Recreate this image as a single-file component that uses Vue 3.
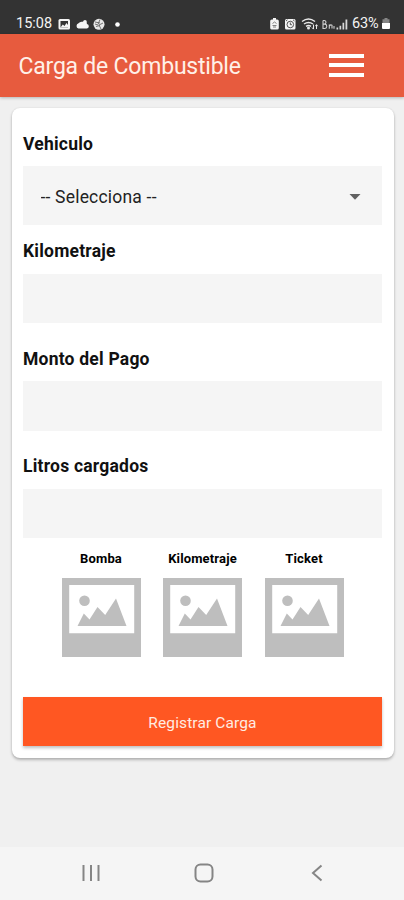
<script setup>
import { ref } from 'vue'

const vehicle = ref('')
const fields = ref([
  { id: 'km', label: 'Kilometraje', value: '' },
  { id: 'monto', label: 'Monto del Pago', value: '' },
  { id: 'litros', label: 'Litros cargados', value: '' }
])
const photos = ['Bomba', 'Kilometraje', 'Ticket']
</script>

<template>
  <div class="screen">
    <div class="status">
      <span class="time">15:08</span>
      <svg class="left-icons" width="66" height="14" viewBox="0 0 66 14">
        <rect x="0.5" y="2" width="11.5" height="10.5" rx="1.5" fill="#f4f4f4" />
        <path d="M2.500 4h7.500v6.500h-7.500z" fill="#333" />
        <path d="M2.500 10.500l2.300-3 1.700 1.500L8.500 6l1.500 2v2.500z" fill="#f4f4f4" />
        <path d="M20.500 11.500a2.700 2.700 0 0 1 0-5.200 4 4 0 0 1 4-1.500 2.800 2.800 0 0 1 4.500 2.200 2.300 2.300 0 0 1 0 4.500z" fill="#f4f4f4" />
        <circle cx="27" cy="4.800" r="1.800" fill="#f4f4f4" />
        <circle cx="41" cy="7.300" r="5.500" fill="#e8e8e8" />
        <path d="M37 5l5 1M42 2.500l-2 5M45 6l-4 2M38 9.500l4-1M41 8l2 4M40 8l-3-1" stroke="#666" stroke-width="0.900" fill="none" />
        <circle cx="59.500" cy="7.500" r="2.300" fill="#fff" />
      </svg>
      <span class="spacer"></span>
      <svg class="right-icons" width="82" height="14" viewBox="0 0 82 14">
        <path d="M4 1h3v1.500h1.200q1.600 0 1.600 1.600v6.800q0 1.600-1.600 1.600H2.800q-1.600 0-1.600-1.600V4.100q0-1.600 1.600-1.600H4z" fill="#f4f4f4" />
        <path d="M3.500 6.500L5.500 5l2 1.500M3.500 8.500h4M4 10h3" stroke="#777" stroke-width="0.900" fill="none" />
        <rect x="16" y="2" width="10.500" height="10.500" rx="1.500" fill="#f4f4f4" />
        <circle cx="21.300" cy="7.500" r="3.300" fill="none" stroke="#444" stroke-width="0.900" />
        <path d="M21.300 5.500v2.200h1.600M17 4l1.500-1.200M25.500 4L24 2.800" stroke="#444" stroke-width="0.900" fill="none" />
        <g fill="none" stroke="#e8e8e8" stroke-width="1.500">
          <path d="M33 4.500q6.500-4.800 13 0M35 7q4.500-3.200 9 0M37 9.300q2.500-1.700 5 0" />
          <path d="M44.500 7.500v4.500M43 10.500l1.500 1.700M47.500 12V7.700M46.300 9.200l1.200-1.500 1.200 1.500" stroke-width="1" />
        </g>
        <circle cx="39.500" cy="11" r="1.500" fill="#e8e8e8" />
        <g fill="none" stroke="#cfcfcf" stroke-width="1.100">
          <path d="M54 3.500v8h1.800q2-.2 2-2.200t-2-2.200h-1.800M54 3.500h1.500q1.500.3 1.500 1.800t-1.500 1.800M60.300 11.800V7.500M60.300 9q1.200-1.700 2.700-.8v3.300M65 11.800V9" />
        </g>
        <path d="M67.500 10.500h1.700v2h-1.700zM70.500 8.800h1.700v3.700h-1.700zM73.500 5.700h1.700v6.800h-1.700zM76.500 2.500h1.800v10h-1.800z" fill="#d8d8d8" />
      </svg>
      <span class="percent">63%</span>
      <svg class="battery" width="8" height="11" viewBox="0 0 8 11">
        <path d="M2.500 0h3v1.300H7.500V6H0.500V1.300h2z" fill="#858585" />
        <path d="M0 5h8v5q0 1-1 1H1q-1 0-1-1z" fill="#fff" />
      </svg>
    </div>

    <header class="appbar">
      <h1>Carga de Combustible</h1>
      <button class="menu" aria-label="Menú"><i></i><i></i><i></i></button>
    </header>

    <main>
      <form class="card" @submit.prevent>
        <label class="first" for="vehiculo">Vehiculo</label>
        <div class="select">
          <select id="vehiculo" v-model="vehicle">
            <option value="">-- Selecciona --</option>
          </select>
          <svg width="12" height="6" viewBox="0 0 12 6"><path d="M0.500 0h11L6 5.800z" fill="#616161" /></svg>
        </div>
        <template v-for="f in fields" :key="f.id">
          <label :for="f.id" :class="f.id">{{ f.label }}</label>
          <input :id="f.id" v-model="f.value" />
        </template>

        <div class="photos">
          <div v-for="p in photos" :key="p" class="photo">
            <span>{{ p }}</span>
            <svg width="79" height="79" viewBox="0 0 79 79">
              <path d="M0 0h79v79H0z" fill="#bebebe" />
              <path d="M7.200 7h65v48.300h-65z" fill="#fff" />
              <circle cx="22.500" cy="22.800" r="5.300" fill="#bebebe" />
              <path d="M15.500 48l6.300-12.500 5.700 6L35.500 29l7.700 8L54 20.500 64.500 48z" fill="#bebebe" />
            </svg>
          </div>
        </div>
        <button class="submit">Registrar Carga</button>
      </form>
    </main>

    <nav>
      <svg width="18" height="18" viewBox="0 0 18 18"><path d="M1.500 1v16M9 1v16M16.500 1v16" stroke="#858585" stroke-width="2" /></svg>
      <svg width="20" height="20" viewBox="0 0 20 20"><rect x="1.500" y="1.500" width="17" height="17" rx="5" fill="none" stroke="#858585" stroke-width="2" /></svg>
      <svg width="12" height="18" viewBox="0 0 12 18"><path d="M10.500 1.500L2 9l8.500 7.500" fill="none" stroke="#858585" stroke-width="2" /></svg>
    </nav>
  </div>
</template>

<style>
body { margin: 0; background: #f0f0f0; }
</style>

<style scoped>
* { box-sizing: border-box; }
.screen {
  width: 404px;
  height: 900px;
  display: flex;
  flex-direction: column;
  background: #f0f0f0;
  font-family: Roboto, "Liberation Sans", sans-serif;
  color: #111;
  overflow: hidden;
}
.status {
  height: 33.500px;
  flex: none;
  background: #333;
  color: #f4f4f4;
  display: flex;
  align-items: center;
  padding: 14px 14.500px 0 16px;
  font-size: 14.500px;
  line-height: 19px;
}
.time { width: 42px; }
.spacer { flex: 1; }
.right-icons { margin-right: 1px; }
.percent { width: 29.500px; font-size: 14.500px; letter-spacing: -0.200px; }
.battery { flex: none; }
.left-icons, .right-icons { flex: none; }
.appbar {
  height: 63px;
  flex: none;
  background: #e75b3e;
  display: flex;
  align-items: center;
  justify-content: space-between;
  padding: 0 40px 0 18.500px;
  box-shadow: 0 1px 3px rgba(0, 0, 0, 0.250);
}
h1 {
  margin: 3px 0 0;
  color: #fff0e8;
  font-size: 23px;
  letter-spacing: -0.220px;
  font-weight: 400;
  line-height: 30px;
  white-space: nowrap;
}
.menu {
  width: 35px;
  padding: 0;
  border: 0;
  background: none;
  display: grid;
  gap: 5.500px;
}
.menu i { height: 4px; background: #fff; }
main { flex: 1; padding: 11.500px 10px 0 11.500px; }
.card {
  height: 650px;
  padding: 26px 12px 12px 11.500px;
  background: #fff;
  border-radius: 8px;
  box-shadow: 0 2px 3px rgba(0, 0, 0, 0.250), 0 0 2px rgba(0, 0, 0, 0.100);
  display: flex;
  flex-direction: column;
}
label {
  height: 20px;
  margin: 25.500px 0 12.500px;
  font-size: 17.500px;
  font-weight: 700;
  line-height: 20px;
  letter-spacing: 0.220px;
}
label.first { margin: 0 0 12px; }
label.km { margin: 15.500px 0 13px; }
.select {
  height: 59px;
  display: flex;
  align-items: center;
  background: #f5f5f5;
  padding: 2px 21px 0 17.500px;
}
select {
  flex: 1;
  appearance: none;
  border: 0;
  padding: 0;
  background: none;
  font: 400 17.500px/24px Roboto, "Liberation Sans", sans-serif;
  letter-spacing: 0.200px;
  color: #222;
}
input {
  height: 49.500px;
  flex: none;
  width: 100%;
  border: 0;
  padding: 0 18px;
  background: #f5f5f5;
  font: 400 17px Roboto, "Liberation Sans", sans-serif;
}
.photos { display: flex; justify-content: center; gap: 22.500px; margin-top: 13px; }
.photo { width: 79px; display: grid; justify-items: center; gap: 11px; }
.photo span { font-size: 13px; font-weight: 700; line-height: 16px; letter-spacing: 0.150px; color: #000; }
.photo svg { display: block; }
.submit {
  height: 49px;
  margin-top: auto;
  border: 0;
  background: #ff5722;
  color: #ffece2;
  font: 400 15.500px/20px Roboto, "Liberation Sans", sans-serif;
  letter-spacing: 0.120px;
  padding: 2px 0 0;
  box-shadow: 0 2px 3px rgba(0, 0, 0, 0.250);
}
nav {
  height: 53px;
  flex: none;
  background: #f5f5f5;
  display: grid;
  grid-template-columns: repeat(3, 113px);
  justify-content: center;
  align-items: center;
  justify-items: center;
  padding: 0 0 1px 4px;
}
</style>
